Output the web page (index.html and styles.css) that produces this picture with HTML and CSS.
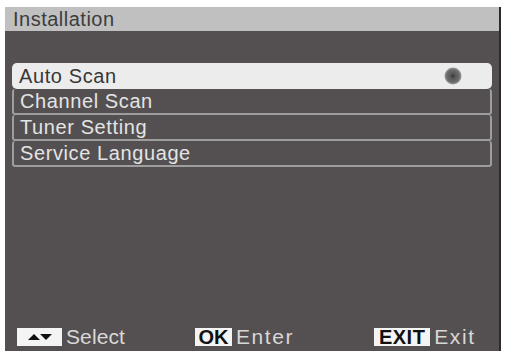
FILE: index.html
```html
<!DOCTYPE html>
<html lang="en">
<head>
    <meta charset="UTF-8">
    <meta name="viewport" content="width=device-width, initial-scale=1.0">
    <title>Installation</title>
    <link rel="stylesheet" href="styles.css">
</head>
<body>
    <div class="screen">
        <div class="title-bar">Installation</div>

        <div class="menu">
            <div class="menu-item active">
                <span>Auto Scan</span>
                <svg class="mark" width="18" height="18" viewBox="0 0 18 18">
                    <defs>
                        <radialGradient id="dot" cx="50%" cy="50%" r="50%">
                            <stop offset="0" stop-color="#2e2e2e"/>
                            <stop offset="0.25" stop-color="#555"/>
                            <stop offset="0.75" stop-color="#6c6c6c"/>
                            <stop offset="1" stop-color="#a0a0a0"/>
                        </radialGradient>
                    </defs>
                    <circle cx="9" cy="9" r="8.5" fill="url(#dot)"/>
                </svg>
            </div>
            <div class="menu-item">Channel Scan</div>
            <div class="menu-item">Tuner Setting</div>
            <div class="menu-item">Service Language</div>
        </div>

        <div class="footer">
            <div class="hint">
                <span class="key key-arrows">
                    <svg width="26" height="8" viewBox="0 0 26 8">
                        <polygon points="1,7 7,1 13,7" fill="#111"/>
                        <polygon points="13,1 25,1 19,7" fill="#111"/>
                    </svg>
                </span>
                <span class="label">Select</span>
            </div>
            <div class="hint hint-ok">
                <span class="key key-ok">OK</span>
                <span class="label wide">Enter</span>
            </div>
            <div class="hint hint-exit">
                <span class="key key-exit">EXIT</span>
                <span class="label wide">Exit</span>
            </div>
        </div>
    </div>
</body>
</html>
```

FILE: styles.css
```css
body {
    margin: 0;
    background-color: #fff;
    font-family: "Liberation Sans", Arial, sans-serif;
}
.screen {
    margin: 7px 0 0 5px;
    width: 494px;
    height: 344px;
    background-color: #545051;
    border-right: 2px solid #2b2b2b;
    display: flex;
    flex-direction: column;
}
.title-bar {
    height: 24px;
    line-height: 24px;
    background-color: #c0c0c0;
    color: #3c3c3c;
    font-size: 20px;
    padding-left: 8px;
    letter-spacing: 0.5px;
}
.menu {
    margin: 32px 7px 0 7px;
}
.menu-item {
    height: 24px;
    line-height: 24px;
    padding-left: 6px;
    font-size: 20px;
    color: #e4e4e4;
    border: 2px solid #9e9e9e;
    border-top: none;
    border-radius: 3px;
    letter-spacing: 0.6px;
}
.menu-item.active {
    height: 26px;
    line-height: 26px;
    padding-left: 7px;
    background-color: #ececec;
    color: #383838;
    border: none;
    border-radius: 5px;
    display: flex;
    align-items: center;
    justify-content: space-between;
    padding-right: 30px;
}
.mark {
    display: block;
}
.footer {
    margin-top: auto;
    margin-bottom: 4px;
    padding-left: 12px;
    display: flex;
    align-items: center;
    height: 20px;
    font-size: 21px;
    color: #d8d8d8;
}
.hint {
    display: flex;
    align-items: center;
    gap: 4px;
}
.label {
    letter-spacing: 0.1px;
}
.label.wide {
    letter-spacing: 1.6px;
}
.hint-ok {
    margin-left: 70px;
}
.hint-exit {
    margin-left: 80px;
}
.key {
    background-color: #f4f4f4;
    color: #111;
    height: 18px;
    display: flex;
    align-items: center;
    justify-content: center;
    font-size: 20px;
}
.key-arrows {
    width: 45px;
}
.key-ok {
    width: 37px;
    font-weight: bold;
}
.key-exit {
    width: 56px;
    font-weight: bold;
    letter-spacing: 0.5px;
}
```
